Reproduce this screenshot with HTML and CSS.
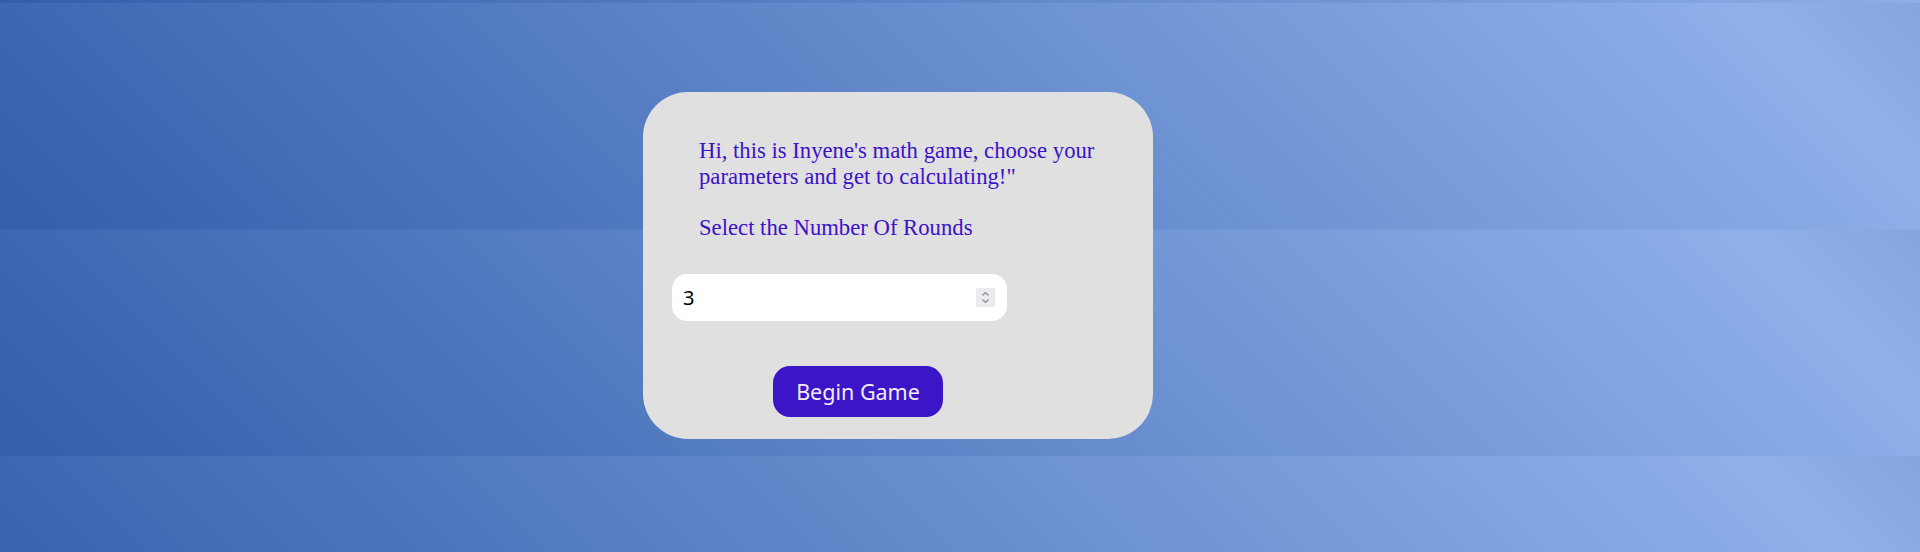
FILE: index.html
```html
<!DOCTYPE html>
<html lang="en">
<head>
<meta charset="utf-8">
<title>Inyene's Math Game</title>
<link rel="stylesheet" href="styles.css">
</head>
<body>
  <main class="card">
    <div class="intro">
      <p class="intro-text">Hi, this is Inyene's math game, choose your parameters and get to calculating!"</p>
      <p class="intro-label">Select the Number Of Rounds</p>
    </div>
    <div class="number-box">
      <input class="number-input" type="text" value="3" aria-label="Number of rounds">
      <span class="spinner" aria-hidden="true">
        <svg width="19" height="19" viewBox="0 0 19 19">
          <path d="M6.5 7.5 L9.5 4.5 L12.5 7.5" fill="none" stroke="#8a8a94" stroke-width="1.2"/>
          <path d="M6.5 11.5 L9.5 14.5 L12.5 11.5" fill="none" stroke="#8a8a94" stroke-width="1.2"/>
        </svg>
      </span>
    </div>
    <div class="actions">
      <button class="begin-btn" type="button">Begin Game</button>
    </div>
  </main>
</body>
</html>
```
FILE: styles.css
```css
html {
  background-image: linear-gradient(45deg, #335eaa 0%, #8fb0e9 92%, #86a5dc 100%);
  background-size: 100% 226.5px;
  background-position: 0 3px;
  background-repeat: repeat;
}

body {
  margin: 0;
  padding: 92px 0 0 643px;
}

.card {
  width: 510px;
  height: 347px;
  box-sizing: border-box;
  background: #e0e0e0;
  border-radius: 45px;
  padding-top: 46px;
  display: flex;
  flex-direction: column;
}

.intro {
  padding-left: 56px;
  width: 430px;
  font-family: "Liberation Serif", "Times New Roman", serif;
  font-size: 22.7px;
  color: #3c12c8;
}

.intro-text {
  margin: 0;
  line-height: 25.7px;
}

.intro-label {
  margin: 26px 0 0;
  line-height: 25px;
}

.number-box {
  margin: 34px 0 0 29px;
  width: 335px;
  height: 47px;
  background: #ffffff;
  border-radius: 15px;
  display: flex;
  align-items: center;
  box-sizing: border-box;
  padding: 0 12px 0 11px;
}

.number-input {
  flex: 1;
  min-width: 0;
  border: none;
  outline: none;
  background: transparent;
  padding: 0;
  font-family: "Noto Sans", "Open Sans", sans-serif;
  font-size: 20px;
  color: #000000;
}

.spinner {
  width: 19px;
  height: 19px;
  background: #ebebef;
  display: flex;
}

.actions {
  margin: 45px 0 0 130px;
}

.begin-btn {
  width: 170px;
  height: 51px;
  border: none;
  border-radius: 17px;
  background: #3a16c6;
  color: #f3ebf8;
  font-family: "Noto Sans", "Open Sans", sans-serif;
  font-size: 21.5px;
  padding: 0;
  cursor: pointer;
}
```
